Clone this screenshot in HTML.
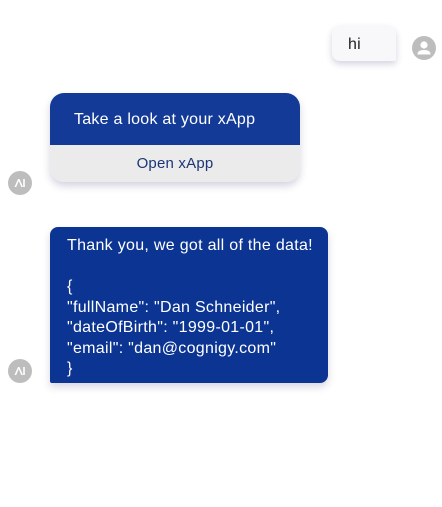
<!DOCTYPE html>
<html><head><style>
body{margin:0;width:442px;height:507px;background:#fff;font-family:"Liberation Sans",sans-serif;position:relative;overflow:hidden}
.abs{position:absolute}
.hi{left:332px;top:26px;width:64px;height:35px;background:#f8f8fa;border-radius:8px 8px 2px 8px;box-shadow:0 3px 7px rgba(60,50,110,.22);font-size:16px;color:#222;line-height:37px;box-sizing:border-box;padding-left:16px;letter-spacing:.2px}
.av{width:24px;height:24px;border-radius:50%;background:#bdbdbd}
.b1{left:50px;top:93px;width:250px;height:89px;border-radius:14px;overflow:hidden;box-shadow:0 4px 8px rgba(60,50,110,.22)}
.b1 .t{background:#143a98;height:52px;color:#fff;font-size:16px;line-height:54px;padding-left:24px;letter-spacing:.25px}
.b1 .o{background:#ebebeb;height:37px;color:#1c3577;font-size:15px;text-align:center;line-height:38px;border-bottom:1px solid #aab;letter-spacing:.2px}
.b2{left:50px;top:227px;width:278px;height:156px;background:#0b3493;border-radius:8px 8px 8px 2px;box-shadow:0 4px 8px rgba(60,50,110,.2);color:#fff;font-size:16px;line-height:20.5px;padding:9px 0 0 17px;box-sizing:border-box;white-space:pre;letter-spacing:.3px}
</style></head><body>
<div class="abs hi">hi</div>
<div class="abs av" style="left:412px;top:36px"><svg width="24" height="24"><circle cx="12" cy="9" r="3.6" fill="#fff"/><path d="M5.5 18.5 Q5.5 14 12 14 Q18.5 14 18.5 18.5 Z" fill="#fff"/></svg></div>
<div class="abs b1"><div class="t">Take a look at your xApp</div><div class="o">Open xApp</div></div>
<div class="abs av" style="left:8px;top:171px"><svg width="24" height="24"><path d="M6.5 16 L10 8 L11.5 8 L15 16 L13.3 16 L10.75 10 L8.2 16Z M15.2 8 H16.8 V16 H15.2Z" fill="#fff"/></svg></div>
<div class="abs b2">Thank you, we got all of the data!

{
"fullName": "Dan Schneider",
"dateOfBirth": "1999-01-01",
"email": "dan@cognigy.com"
}</div>
<div class="abs av" style="left:8px;top:359px"><svg width="24" height="24"><path d="M6.5 16 L10 8 L11.5 8 L15 16 L13.3 16 L10.75 10 L8.2 16Z M15.2 8 H16.8 V16 H15.2Z" fill="#fff"/></svg></div>
</body></html>
